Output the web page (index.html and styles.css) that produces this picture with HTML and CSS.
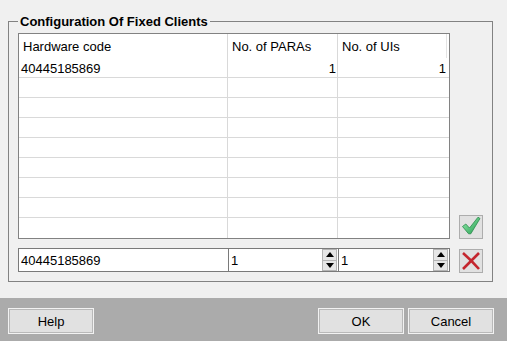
FILE: index.html
```html
<!DOCTYPE html>
<html lang="en">

<head>
    <meta charset="UTF-8">
    <title>Configuration Of Fixed Clients</title>
    <link rel="stylesheet" href="styles.css">
</head>

<body>
    <div class="content">
        <fieldset class="group">
            <legend>Configuration Of Fixed Clients</legend>
            <div class="group-body">
                <div class="editor">
                    <div class="grid">
                        <div class="row head">
                            <div class="cell">Hardware code</div>
                            <div class="cell">No. of PARAs</div>
                            <div class="cell">No. of UIs</div>
                        </div>
                        <div class="row">
                            <div class="cell">40445185869</div>
                            <div class="cell num">1</div>
                            <div class="cell num">1</div>
                        </div>
                        <div class="row"><div class="cell"></div><div class="cell"></div><div class="cell"></div></div>
                        <div class="row"><div class="cell"></div><div class="cell"></div><div class="cell"></div></div>
                        <div class="row"><div class="cell"></div><div class="cell"></div><div class="cell"></div></div>
                        <div class="row"><div class="cell"></div><div class="cell"></div><div class="cell"></div></div>
                        <div class="row"><div class="cell"></div><div class="cell"></div><div class="cell"></div></div>
                        <div class="row"><div class="cell"></div><div class="cell"></div><div class="cell"></div></div>
                        <div class="row"><div class="cell"></div><div class="cell"></div><div class="cell"></div></div>
                        <div class="row"><div class="cell"></div><div class="cell"></div><div class="cell"></div></div>
                    </div>

                    <!-- Entry fields for a new client -->
                    <div class="entry">
                        <div class="field f-code"><input type="text" value="40445185869"></div>
                        <div class="field f-paras">
                            <input type="text" value="1">
                            <div class="spinner"><span class="up"></span><span class="down"></span></div>
                        </div>
                        <div class="field f-uis">
                            <input type="text" value="1">
                            <div class="spinner"><span class="up"></span><span class="down"></span></div>
                        </div>
                    </div>
                </div>

                <div class="side">
                    <button class="icon-btn" title="Apply">
                        <svg width="22" height="22" viewBox="0 0 22 22">
                            <defs>
                                <linearGradient id="okfill" x1="0" y1="0" x2="1" y2="1">
                                    <stop offset="0" stop-color="#9bf0b0"/>
                                    <stop offset="1" stop-color="#1f9a4e"/>
                                </linearGradient>
                            </defs>
                            <path d="M2.5 10.5 L5.8 8 L9.5 12 L18 1.2 L20 2.5 L10.8 17.8 L8.6 17.8 Z" fill="url(#okfill)" stroke="#2a8a4a" stroke-width="0.8" stroke-linejoin="round"/>
                        </svg>
                    </button>
                    <button class="icon-btn" title="Remove">
                        <svg width="22" height="22" viewBox="0 0 22 22">
                            <path d="M3 3 Q11 10 19 19 M19 3 Q11 11 3 19" stroke="#c4262e" stroke-width="2.6" fill="none"/>
                        </svg>
                    </button>
                </div>
            </div>
        </fieldset>
    </div>

    <div class="footer">
        <button class="btn">Help</button>
        <div class="spacer"></div>
        <button class="btn">OK</button>
        <button class="btn">Cancel</button>
    </div>
</body>

</html>
```

FILE: styles.css
```css
* {
    box-sizing: border-box;
}

body {
    margin: 0;
    width: 507px;
    height: 341px;
    overflow: hidden;
    background: #f0f0f0;
    color: #000;
    font-family: 'Liberation Sans', Arial, sans-serif;
    font-size: 13px;
}

.content {
    height: 298px;
    padding: 14px 14px 0 8px;
}

.group {
    margin: 0;
    min-width: 0;
    padding: 4px 9px 9px;
    border: 1px solid #828282;
}

.group legend {
    padding: 0 2px;
    font-weight: bold;
    line-height: 15px;
}

.group-body {
    display: flex;
    gap: 9px;
}

.editor {
    width: 432px;
    display: flex;
    flex-direction: column;
    gap: 9px;
}

/* Table of clients */
.grid {
    border: 1px solid #828282;
    background: #fff;
}

.row {
    display: grid;
    grid-template-columns: 209px 110px 1fr;
    height: 20px;
    border-bottom: 1px solid #d9d9d9;
}

.row:last-child {
    border-bottom: 0;
}

.row.head {
    height: 24px;
    border-bottom: 0;
}

.cell {
    border-right: 1px solid #d9d9d9;
    padding: 3px 2px 0;
    line-height: 16px;
    white-space: nowrap;
}

.cell:last-child {
    border-right: 0;
}

.head .cell {
    padding: 5px 4px 0;
}

.head .cell:last-child {
    margin-right: 2px;
    border-right: 1px solid #e3e3e3;
}

.cell.num {
    text-align: right;
    padding-right: 1px;
}

.cell.num:last-child {
    padding-right: 3px;
}

/* Entry row */
.entry {
    display: flex;
    height: 24px;
}

.field {
    display: flex;
    align-items: center;
    height: 24px;
    border: 1px solid #7a7a7a;
    background: #fff;
}

.field + .field {
    margin-left: -1px;
}

.f-code {
    width: 211px;
}

.f-paras {
    width: 111px;
}

.f-uis {
    width: 112px;
}

.field input {
    flex: 1;
    min-width: 0;
    height: 100%;
    border: none;
    outline: none;
    padding: 1px 2px 0;
    background: transparent;
    font-family: inherit;
    font-size: 13px;
    color: #000;
}

.spinner {
    width: 15px;
    height: 22px;
    margin-right: 1px;
    display: flex;
    flex-direction: column;
}

.spinner span {
    flex: 1;
    display: flex;
    align-items: center;
    justify-content: center;
    background: #e6e6e6;
    border: 1px solid #b4b4b4;
}

.spinner span + span {
    border-top: 0;
}

.spinner .up::before {
    content: '';
    border-left: 4px solid transparent;
    border-right: 4px solid transparent;
    border-bottom: 5px solid #000;
}

.spinner .down::before {
    content: '';
    border-left: 4px solid transparent;
    border-right: 4px solid transparent;
    border-top: 5px solid #000;
}

/* Apply / remove buttons */
.side {
    display: flex;
    flex-direction: column;
    justify-content: flex-end;
    gap: 10px;
    margin-bottom: -1px;
}

.icon-btn {
    width: 24px;
    height: 24px;
    padding: 0;
    border: 1px solid #adadad;
    background: #e1e1e1;
    display: flex;
}

/* Dialog buttons */
.footer {
    height: 43px;
    background: #ababab;
    display: flex;
    align-items: flex-start;
    gap: 4px;
    padding: 10px 13px 0 8px;
}

.spacer {
    flex: 1;
}

.btn {
    width: 86px;
    height: 26px;
    padding: 0;
    border: 1px solid #f2f2f2;
    box-shadow: inset 0 0 0 1px #b9b9b9;
    background: #e1e1e1;
    font-family: inherit;
    font-size: 13px;
    color: #000;
}
```
